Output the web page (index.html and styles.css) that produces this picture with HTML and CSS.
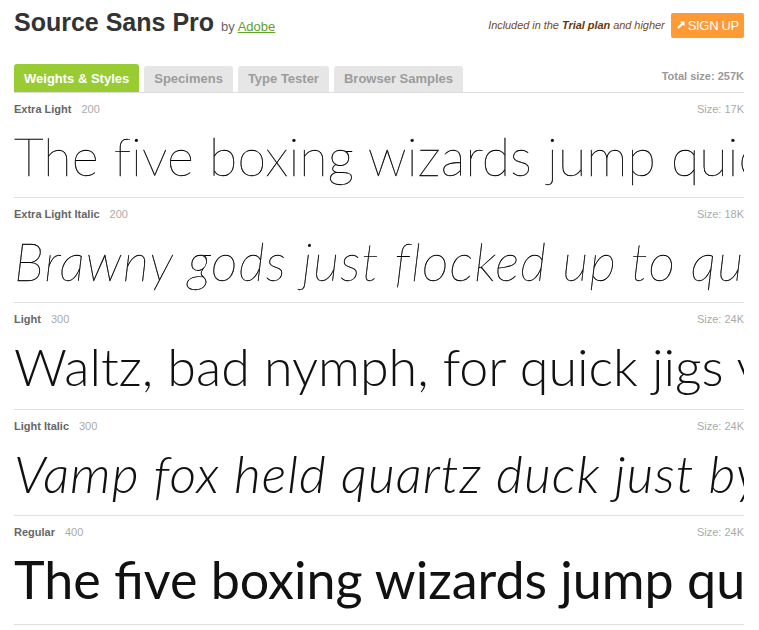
FILE: index.html
```html
<!DOCTYPE html>
<html lang="en">
<head>
<meta charset="utf-8">
<title>Source Sans Pro by Adobe</title>
<link rel="stylesheet" href="styles.css">
</head>
<body>
<div class="page">
  <header class="header">
    <div class="title">
      <h1 class="family">Source Sans Pro</h1>
      <span class="by">by <a class="foundry" href="#">Adobe</a></span>
    </div>
    <div class="plan">
      <span class="plan-note">Included in the <b>Trial plan</b> and higher</span>
      <a class="signup" href="#"><svg class="signup-icon" width="8" height="8" viewBox="0 0 9 9" aria-hidden="true"><path d="M3 0.5H8.5V6L6.6 4.1L2 8.7L0.3 7L4.9 2.4Z" fill="#fff"/></svg>SIGN UP</a>
    </div>
  </header>

  <nav class="tabs">
    <div class="tab-list">
      <a class="tab tab-active" href="#">Weights &amp; Styles</a>
      <a class="tab" href="#">Specimens</a>
      <a class="tab" href="#">Type Tester</a>
      <a class="tab" href="#">Browser Samples</a>
    </div>
    <div class="total">Total size: 257K</div>
  </nav>

  <section class="styles">
    <div class="row">
      <div class="meta"><span class="style-name">Extra Light<span class="weight">200</span></span><span class="size">Size: 17K</span></div>
      <div class="sample w200">The five boxing wizards jump quickly.</div>
    </div>
    <div class="row">
      <div class="meta"><span class="style-name">Extra Light Italic<span class="weight">200</span></span><span class="size">Size: 18K</span></div>
      <div class="sample w200 italic">Brawny gods just flocked up to quiz and vex him.</div>
    </div>
    <div class="row row-light">
      <div class="meta"><span class="style-name">Light<span class="weight">300</span></span><span class="size">Size: 24K</span></div>
      <div class="sample w300">Waltz, bad nymph, for quick jigs vex.</div>
    </div>
    <div class="row row-light-italic">
      <div class="meta"><span class="style-name">Light Italic<span class="weight">300</span></span><span class="size">Size: 24K</span></div>
      <div class="sample w300 italic">Vamp fox held quartz duck just by wing.</div>
    </div>
    <div class="row row-regular">
      <div class="meta"><span class="style-name">Regular<span class="weight">400</span></span><span class="size">Size: 24K</span></div>
      <div class="sample w400">The five boxing wizards jump quickly.</div>
    </div>
  </section>
</div>
</body>
</html>
```
FILE: styles.css
```css
html, body {
  margin: 0;
  padding: 0;
  background: #fff;
}

body {
  font-family: "Liberation Sans", Arial, sans-serif;
  color: #333;
}

.page {
  width: 730px;
  padding: 0 15px 0 14px;
}

/* header */
.header {
  display: flex;
  justify-content: space-between;
  align-items: flex-start;
  padding-top: 8px;
}

.title {
  display: flex;
  align-items: baseline;
}

.family {
  margin: 0;
  font-size: 25px;
  line-height: 28px;
  font-weight: bold;
  color: #333;
}

.by {
  margin-left: 7px;
  font-size: 13px;
  color: #666;
}

.foundry {
  color: #62a026;
  text-decoration: underline;
}

.plan {
  display: flex;
  align-items: baseline;
  margin-top: 5px;
}

.plan-note {
  font-size: 11px;
  font-style: italic;
  color: #7a4a12;
  margin-right: 6px;
  letter-spacing: -0.05px;
}

.plan-note b {
  color: #663a08;
}

.signup {
  display: flex;
  align-items: center;
  height: 25px;
  line-height: 25px;
  padding: 0 5px 0 6px;
  background: #ff9a35;
  border-radius: 2px;
  color: #fff;
  font-size: 13px;
  letter-spacing: -0.3px;
  text-decoration: none;
}

.signup-icon {
  margin-right: 3px;
  margin-top: -1px;
}

/* tabs */
.tabs {
  display: flex;
  align-items: flex-end;
  margin-top: 25px;
  border-bottom: 1px solid #dddddd;
}

.tab-list {
  display: flex;
  align-items: flex-end;
  gap: 5px;
}

.tab {
  display: block;
  padding: 0 10px;
  line-height: 26px;
  font-size: 13px;
  font-weight: bold;
  color: #9c9c9c;
  background: #e6e6e6;
  border-radius: 3px 3px 0 0;
  text-decoration: none;
}

.tab-active {
  padding-top: 2px;
  background: #99cc33;
  color: #fff;
}

.total {
  margin-left: auto;
  padding-bottom: 3px;
  line-height: 26px;
  font-size: 11px;
  font-weight: bold;
  color: #999;
}

/* style rows */
.row {
  padding: 9px 0 1px;
  border-bottom: 1px solid #e0e0e0;
}

.row-light { padding-bottom: 3px; }
.row-light-italic { padding-bottom: 2px; }
.row-regular { padding-bottom: 5px; }

.meta {
  display: flex;
  justify-content: space-between;
  line-height: 14px;
  font-size: 11px;
}

.style-name {
  font-weight: bold;
  color: #666;
}

.weight {
  margin-left: 10px;
  font-weight: normal;
  color: #aaa;
}

.size {
  color: #aaa;
}

.sample {
  font-family: Lato, "Open Sans", sans-serif;
  font-size: 52px;
  line-height: 80px;
  height: 80px;
  color: #111;
  white-space: nowrap;
  overflow: hidden;
}

.w200 {
  font-weight: 100;
  color: #000;
  letter-spacing: 0.15px;
  -webkit-text-stroke: 0.35px #000;
}

.w300 { font-weight: 300; }
.w400 { font-weight: 400; }

.italic {
  font-style: italic;
  letter-spacing: 1px;
}
```
